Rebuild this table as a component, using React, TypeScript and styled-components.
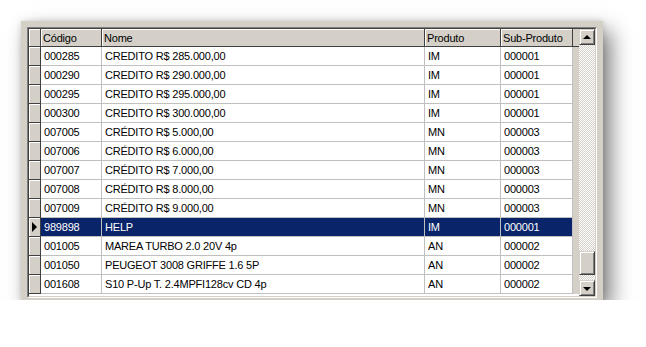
import React from 'react';
import styled, { createGlobalStyle } from 'styled-components';

const GlobalStyle = createGlobalStyle`
    html, body {
        margin: 0;
        padding: 0;
        background: #ffffff;
    }
    body {
        font-family: 'Liberation Sans', Arial, sans-serif;
        font-size: 11px;
        letter-spacing: -0.2px;
        color: #000000;
    }
`;

const FACE = '#d4d0c8';
const COLS = '12px 61px 323px 76px 72px 1fr';

interface Registro {
    codigo: string;
    nome: string;
    produto: string;
    subProduto: string;
}

const registros: Registro[] = [
    { codigo: '000285', nome: 'CREDITO R$ 285.000,00', produto: 'IM', subProduto: '000001' },
    { codigo: '000290', nome: 'CREDITO R$ 290.000,00', produto: 'IM', subProduto: '000001' },
    { codigo: '000295', nome: 'CREDITO R$ 295.000,00', produto: 'IM', subProduto: '000001' },
    { codigo: '000300', nome: 'CREDITO R$ 300.000,00', produto: 'IM', subProduto: '000001' },
    { codigo: '007005', nome: 'CRÉDITO R$ 5.000,00', produto: 'MN', subProduto: '000003' },
    { codigo: '007006', nome: 'CRÉDITO R$ 6.000,00', produto: 'MN', subProduto: '000003' },
    { codigo: '007007', nome: 'CRÉDITO R$ 7.000,00', produto: 'MN', subProduto: '000003' },
    { codigo: '007008', nome: 'CRÉDITO R$ 8.000,00', produto: 'MN', subProduto: '000003' },
    { codigo: '007009', nome: 'CRÉDITO R$ 9.000,00', produto: 'MN', subProduto: '000003' },
    { codigo: '989898', nome: 'HELP', produto: 'IM', subProduto: '000001' },
    { codigo: '001005', nome: 'MAREA TURBO 2.0 20V 4p', produto: 'AN', subProduto: '000002' },
    { codigo: '001050', nome: 'PEUGEOT 3008 GRIFFE 1.6 5P', produto: 'AN', subProduto: '000002' },
    { codigo: '001608', nome: 'S10 P-Up T. 2.4MPFI128cv CD 4p', produto: 'AN', subProduto: '000002' },
];

const SELECTED = 9;

const Window = styled.div`
    width: 582px;
    height: 279px;
    margin: 21px 0 0 21px;
    padding: 6px;
    box-sizing: border-box;
    background: ${FACE};
    box-shadow: 8px 10px 20px rgba(0, 0, 0, 0.5), 0 0 6px rgba(0, 0, 0, 0.15);
`;

const Grid = styled.div`
    display: flex;
    width: 570px;
    height: 271px;
    box-sizing: border-box;
    border: 1px solid;
    border-color: #808080 #ffffff #ffffff #808080;
`;

const GridInner = styled.div`
    display: flex;
    flex: 1;
    border: 1px solid;
    border-color: #404040 ${FACE} ${FACE} #404040;
    background: #ffffff;
    overflow: hidden;
`;

const Table = styled.div`
    flex: 1;
    display: flex;
    flex-direction: column;
`;

const HeaderRow = styled.div`
    display: grid;
    grid-template-columns: ${COLS};
    height: 18px;
`;

const HeaderCell = styled.div`
    box-sizing: border-box;
    background: ${FACE};
    border-right: 1px solid #404040;
    border-bottom: 1px solid #404040;
    box-shadow: inset 1px 1px 0 #ffffff;
    padding: 1px 0 0 2px;
    line-height: 16px;
    white-space: nowrap;
    overflow: hidden;
`;

const Filler = styled.div<{ $header?: boolean }>`
    background: ${FACE};
    border-bottom: ${(p) => (p.$header ? '1px solid #404040' : 'none')};
    box-sizing: border-box;
`;

const Row = styled.div<{ $selected: boolean }>`
    display: grid;
    grid-template-columns: ${COLS};
    height: 19px;
    background: ${(p) => (p.$selected ? '#0a246a' : '#ffffff')};
    color: ${(p) => (p.$selected ? '#ffffff' : '#000000')};
`;

const Indicator = styled.div`
    box-sizing: border-box;
    background: ${FACE};
    border-right: 1px solid #404040;
    border-bottom: 1px solid #404040;
    box-shadow: inset 1px 1px 0 #ffffff;
    display: flex;
    align-items: center;
    padding-left: 3px;
`;

const Arrow = styled.span`
    width: 0;
    height: 0;
    border-top: 5px solid transparent;
    border-bottom: 5px solid transparent;
    border-left: 5px solid #000000;
`;

const Cell = styled.div`
    box-sizing: border-box;
    border-right: 1px solid #c0c0c0;
    border-bottom: 1px solid #c0c0c0;
    padding: 1px 0 0 3px;
    line-height: 17px;
    white-space: nowrap;
    overflow: hidden;
`;

const ScrollBar = styled.div`
    width: 16px;
    display: flex;
    flex-direction: column;
`;

const ScrollButton = styled.div`
    width: 16px;
    height: 16px;
    box-sizing: border-box;
    background: ${FACE};
    border: 1px solid;
    border-color: ${FACE} #404040 #404040 ${FACE};
    box-shadow: inset 1px 1px 0 #ffffff, inset -1px -1px 0 #808080;
    display: flex;
    align-items: center;
    justify-content: center;
`;

const ArrowUp = styled.span`
    width: 0;
    height: 0;
    border-left: 4px solid transparent;
    border-right: 4px solid transparent;
    border-bottom: 4px solid #000000;
    margin-top: -1px;
`;

const ArrowDown = styled.span`
    width: 0;
    height: 0;
    border-left: 4px solid transparent;
    border-right: 4px solid transparent;
    border-top: 4px solid #000000;
    margin-top: 1px;
`;

const Track = styled.div`
    flex: 1;
    display: flex;
    flex-direction: column;
    background: repeating-conic-gradient(${FACE} 0 25%, #ffffff 0 50%) 0 0 / 2px 2px;
`;

const Thumb = styled.div`
    height: 24px;
    margin-top: 206px;
    box-sizing: border-box;
    background: ${FACE};
    border: 1px solid;
    border-color: ${FACE} #404040 #404040 ${FACE};
    box-shadow: inset 1px 1px 0 #ffffff, inset -1px -1px 0 #808080;
`;

export default function App(): JSX.Element {
    return (
        <>
            <GlobalStyle />
            <Window>
                <Grid>
                    <GridInner>
                        <Table>
                            <HeaderRow>
                                <HeaderCell />
                                <HeaderCell>Código</HeaderCell>
                                <HeaderCell>Nome</HeaderCell>
                                <HeaderCell>Produto</HeaderCell>
                                <HeaderCell>Sub-Produto</HeaderCell>
                                <Filler $header />
                            </HeaderRow>
                            {registros.map((r, idx) => (
                                <Row key={r.codigo} $selected={idx === SELECTED}>
                                    <Indicator>{idx === SELECTED && <Arrow />}</Indicator>
                                    <Cell>{r.codigo}</Cell>
                                    <Cell>{r.nome}</Cell>
                                    <Cell>{r.produto}</Cell>
                                    <Cell>{r.subProduto}</Cell>
                                    <Filler />
                                </Row>
                            ))}
                        </Table>
                        <ScrollBar>
                            <ScrollButton>
                                <ArrowUp />
                            </ScrollButton>
                            <Track>
                                <Thumb />
                            </Track>
                            <ScrollButton>
                                <ArrowDown />
                            </ScrollButton>
                        </ScrollBar>
                    </GridInner>
                </Grid>
            </Window>
        </>
    );
}
